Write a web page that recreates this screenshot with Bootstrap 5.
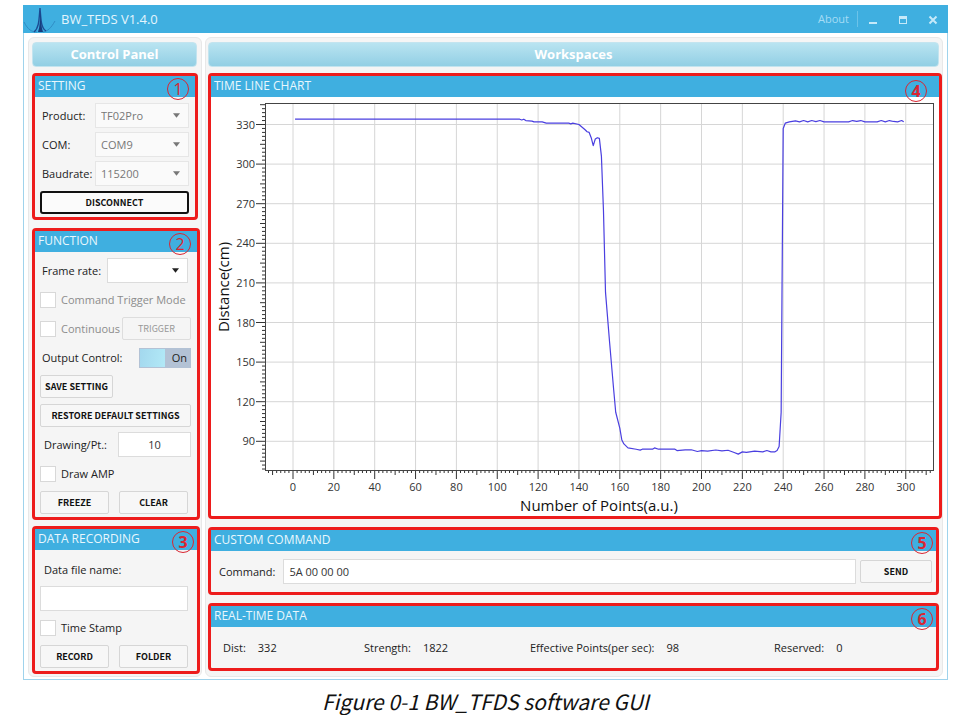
<!DOCTYPE html>
<html lang="en">
<head>
<meta charset="utf-8">
<meta name="viewport" content="width=device-width, initial-scale=1">
<title>BW_TFDS V1.4.0</title>
<link href="https://cdn.jsdelivr.net/npm/bootstrap@5.3.0/dist/css/bootstrap.min.css" rel="stylesheet">
<style>
  :root { --app-blue: #3fafe0; --mark-red: #ed1c1c; }
  body { font-family: "Open Sans", "Noto Sans", sans-serif; font-size: 11px; line-height: 16px; color: #222; background: #fff; }
  .page-wrap { padding: 5px 12px 0 23px; }
  .app-window { border: 1px solid #9fd3ec; border-top: 0; background: #fff; }
  .title-strip { background: var(--app-blue); height: 28px; margin: 0 -1px; color: #e4f5fd; }
  .title-strip .app-name { font-size: 13px; font-weight: 400; }
  .title-strip a { color: #a5dcf5; font-size: 11px; text-decoration: none; border-right: 1px solid #6cc3e9; }
  .title-strip button { color: #c5e9f9; border: 0; background: none; padding: 0; width: 30px; height: 20px; }
  .app-body { padding: 4px 4px 2px 4px; gap: 3px; }
  .side-col { width: 174px; flex: none; }
  .pane { background: #f5f5f5; border: 1px solid #e8e8e8; border-radius: 6px; padding: 4px 1px 2px 3px; min-width: 0; }
  .pane-work { padding: 4px 0 2px 2px; }
  .pane-title { height: 25px; border-radius: 4px; border: 1px solid #c3e4ef; background: linear-gradient(#b9e4f1, #92cfe4); color: #fff; font-size: 13px; line-height: 23px; font-weight: 700; text-align: center; margin: 0 3px 6px 0; }
  .framed { position: relative; border: 3px solid var(--mark-red); border-radius: 4px; background: #f5f5f5; }
  .framed h2 { margin: 0; height: 21px; padding-left: 3px; background: var(--app-blue); color: #e9f7fd; font-size: 12px; font-weight: 400; line-height: 20px; }
  .side-col .framed { margin: 0 0 6px; }
  .side-col .framed.first { margin: 0 2px 8px 0; }
  .call-no { position: absolute; top: 2px; right: 3px; width: 22px; height: 22px; border: 1px solid #d92632; border-radius: 50%; color: #d92632; font-size: 16px; line-height: 20px; font-weight: 700; text-align: center; }
  .call-no.light-no { right: 6px; font-weight: 400; }
  .call-no.wide-no { right: 12px; top: 4px; }
  .rows { padding: 4px 6px 0 5px; }
  .rows-narrow { padding: 5px 9px 0 5px; }
  .rows label { white-space: nowrap; }
  .lead-in { padding-left: 2px; }
  .line { height: 29px; display: flex; align-items: center; }
  .line-inset { padding-right: 3px; }
  .btn-app { height: 23px; padding: 0 4px; border: 1px solid #d6d6d6; border-radius: 2px; background: #f7f7f7; color: #111; font-family: "Noto Sans CJK SC", sans-serif; font-size: 9px; line-height: 16px; font-weight: 700; white-space: nowrap; }
  .btn-app:disabled { background: #f5f5f5; border-color: #ddd; color: #999; opacity: 1; font-weight: 400; }
  .btn-focus { border: 2px solid #111; border-radius: 3px; background: #fbfbfb; }
  .form-control.field, .form-select.field { height: 25px; min-height: 0; border: 1px solid #dcdcdc; border-radius: 0; font-size: 11px; line-height: 16px; padding: 0 5px; background-color: #fff; color: #333; box-shadow: none; }
  .form-select.field { background-image: url("data:image/svg+xml,%3Csvg xmlns='http://www.w3.org/2000/svg' viewBox='0 0 8 5'%3E%3Cpath d='M0 0h8L4 5z' fill='%23222'/%3E%3C/svg%3E"); background-size: 7px 5px; background-position: right 8px center; }
  .form-select.field:disabled { color: #777; background-color: #fafafa; border-color: #e6e6e6; opacity: 1; background-image: url("data:image/svg+xml,%3Csvg xmlns='http://www.w3.org/2000/svg' viewBox='0 0 8 5'%3E%3Cpath d='M0 0h8L4 5z' fill='%23777'/%3E%3C/svg%3E"); }
  .w-long { width: 94px !important; flex: none; } .w-mid { width: 81px !important; flex: none; } .w-num { width: 73px !important; flex: none; }
  .w-half { width: 69px; }
  .w-save { width: 73px; }
  .w-send { width: 72px; flex: none; }
  .tick { width: 16px; height: 16px; border-radius: 0 !important; border: 1px solid #d8d8d8; margin: 0 5px 0 0; float: none; background-color: #fff; opacity: 1 !important; flex: none; }
  .muted-text { color: #8c8c8c; }
  .switch-box { width: 52px; height: 20px; background: #b3c2d5; }
  .switch-box input { appearance: none; width: 25px; height: 18px; margin: 0 0 0 1px; background: linear-gradient(100deg, #a3d8ee, #b2e9f7); }
  .chart-pane { background: #fff; }
  .chart-pane svg { display: block; width: 100%; height: auto; }
  .low-frame { margin: 8px 3px 0 0; }
  .read-outs { height: 41px; padding: 0 0 0 12px; }
  .read-outs dl { display: flex; gap: 12px; margin: 0; }
  .read-outs dt { font-weight: 400; } .read-outs dd { margin: 0; }
  .span-a { width: 141px; } .span-b { width: 166px; } .span-c { width: 244px; }
  .fig-note { font-family: "Noto Sans CJK SC", sans-serif; font-size: 21px; line-height: 28px; font-style: italic; color: #111; margin: 7px 0 0; text-align: center; }
</style>
</head>
<body>
<main class="page-wrap">
<div class="app-window">
  <header class="title-strip d-flex align-items-center">
    <svg width="34" height="28" viewBox="0 0 34 28" aria-hidden="true">
      <path d="M1 17c4 8 8 10 13 10M20 27c5-1 8-4 12-11" fill="none" stroke="#2f8cc4" stroke-width="1"/>
      <path d="M11 27c5-4 5-12 6-24 1 12 1 20 6 23" fill="none" stroke="#1c4b93" stroke-width="1.4"/>
      <path d="M15 27c2-6 2-12 2-20 1 8 1 14 3 20z" fill="#173b7c"/>
    </svg>
    <span class="app-name ms-1">BW_TFDS V1.4.0</span>
    <a class="ms-auto pe-2" href="#about">About</a>
    <button type="button" aria-label="Minimize"><svg width="10" height="10"><path d="M1 7h8v2H1z" fill="currentColor"/></svg></button>
    <button type="button" aria-label="Maximize"><svg width="10" height="10"><path d="M1 1h8v8H1zM2 4v4h6V4z" fill="currentColor" fill-rule="evenodd"/></svg></button>
    <button type="button" aria-label="Close"><svg width="10" height="10"><path d="M1.500 1.500l7 7m0-7l-7 7" stroke="currentColor" stroke-width="2"/></svg></button>
  </header>

  <div class="app-body d-flex">
    <aside class="side-col pane">
      <h1 class="pane-title">Control Panel</h1>

      <section class="framed first">
        <h2>SETTING</h2><span class="call-no light-no">1</span>
        <div class="rows">
          <div class="line justify-content-between"><label for="product" class="lead-in">Product:</label><select id="product" class="form-select field w-long" disabled><option>TF02Pro</option></select></div>
          <div class="line justify-content-between"><label for="com" class="lead-in">COM:</label><select id="com" class="form-select field w-long" disabled><option>COM9</option></select></div>
          <div class="line justify-content-between"><label for="baud" class="lead-in">Baudrate:</label><select id="baud" class="form-select field w-long" disabled><option>115200</option></select></div>
          <div class="line"><button type="button" class="btn btn-app btn-focus w-100">DISCONNECT</button></div>
        </div>
      </section>

      <section class="framed">
        <h2>FUNCTION</h2><span class="call-no light-no">2</span>
        <div class="rows">
          <div class="line line-inset justify-content-between"><label for="rate" class="lead-in">Frame rate:</label><select id="rate" class="form-select field w-mid"><option></option></select></div>
          <div class="line"><input class="form-check-input tick" type="checkbox" id="trig" disabled><label for="trig" class="muted-text">Command Trigger Mode</label></div>
          <div class="line"><input class="form-check-input tick" type="checkbox" id="cont" disabled><label for="cont" class="muted-text">Continuous</label><button type="button" class="btn btn-app w-half ms-auto" disabled>TRIGGER</button></div>
          <div class="line justify-content-between"><label for="outctl" class="lead-in">Output Control:</label><span class="switch-box d-flex align-items-center"><input type="checkbox" role="switch" id="outctl" checked><span class="ms-auto pe-1">On</span></span></div>
          <div class="line"><button type="button" class="btn btn-app w-save">SAVE SETTING</button></div>
          <div class="line"><button type="button" class="btn btn-app w-100">RESTORE DEFAULT SETTINGS</button></div>
          <div class="line justify-content-between"><label for="pt" class="ps-1">Drawing/Pt.:</label><input id="pt" class="form-control field w-num text-center" value="10"></div>
          <div class="line"><input class="form-check-input tick" type="checkbox" id="amp"><label for="amp">Draw AMP</label></div>
          <div class="line line-inset justify-content-between"><button type="button" class="btn btn-app w-half">FREEZE</button><button type="button" class="btn btn-app w-half">CLEAR</button></div>
        </div>
      </section>

      <section class="framed mb-0">
        <h2>DATA RECORDING</h2><span class="call-no">3</span>
        <div class="rows rows-narrow">
          <div class="line"><label for="fname" class="ps-1">Data file name:</label></div>
          <div class="line"><input id="fname" class="form-control field"></div>
          <div class="line"><input class="form-check-input tick" type="checkbox" id="stamp"><label for="stamp">Time Stamp</label></div>
          <div class="line justify-content-between"><button type="button" class="btn btn-app w-half">RECORD</button><button type="button" class="btn btn-app w-half">FOLDER</button></div>
        </div>
      </section>
    </aside>

    <div class="pane pane-work flex-grow-1 d-flex flex-column">
      <h1 class="pane-title">Workspaces</h1>

      <section class="framed chart-pane">
        <h2>TIME LINE CHART</h2><span class="call-no wide-no">4</span>
        <svg id="chart" viewBox="0 0 728 419" role="img" aria-label="Distance against number of points"></svg>
      </section>

      <section class="framed low-frame">
        <h2>CUSTOM COMMAND</h2><span class="call-no">5</span>
        <div class="d-flex align-items-center gap-1 px-1 pt-2 pb-2">
          <label for="cmd" class="ps-1 pe-1">Command:</label>
          <input id="cmd" class="form-control field" value="5A 00 00 00">
          <button type="button" class="btn btn-app w-send">SEND</button>
        </div>
      </section>

      <section class="framed low-frame">
        <h2>REAL-TIME DATA</h2><span class="call-no">6</span>
        <div class="read-outs d-flex align-items-center">
          <dl class="span-a"><dt>Dist:</dt><dd>332</dd></dl>
          <dl class="span-b"><dt>Strength:</dt><dd>1822</dd></dl>
          <dl class="span-c"><dt>Effective Points(per sec):</dt><dd>98</dd></dl>
          <dl><dt>Reserved:</dt><dd>0</dd></dl>
        </div>
      </section>
    </div>
  </div>
</div>
<p class="fig-note">Figure 0-1 BW_TFDS software GUI</p>
</main>

<script src="https://cdn.jsdelivr.net/npm/bootstrap@5.3.0/dist/js/bootstrap.bundle.min.js"></script>
<script>
  const svg = document.getElementById('chart');
  const L = 54, T = 6, R = 722, B = 373;
  const px = v => 82 + v * 2.0425;
  const py = v => 27.5 + (330 - v) * 1.32;
  const add = (tag, attrs, text) => {
    const e = document.createElementNS('http://www.w3.org/2000/svg', tag);
    for (const k in attrs) e.setAttribute(k, attrs[k]);
    if (text !== undefined) e.textContent = text;
    svg.appendChild(e);
  };
  let grid = '', ticks = '';
  for (let v = 0; v <= 300; v += 20) grid += `M${px(v)} ${T}V${B}`;
  for (let v = 90; v <= 330; v += 30) grid += `M${L} ${py(v)}H${R}`;
  for (let v = -12; v <= 312; v += 2) ticks += `M${px(v)} ${B}v${v % 20 === 0 ? 9 : v % 10 === 0 ? 5 : 3}`;
  for (let v = 69; v <= 345; v += 3) ticks += `M${L} ${py(v)}h-${v % 30 === 0 ? 9 : v % 15 === 0 ? 5 : 3}`;
  add('path', { d: grid, stroke: '#d6d6d6', 'stroke-width': 1, fill: 'none' });
  add('path', { d: ticks, stroke: '#333', 'stroke-width': 1, fill: 'none' });
  add('rect', { x: L + .5, y: T + .5, width: R - L, height: B - T, fill: 'none', stroke: '#444' });
  for (let v = 0; v <= 300; v += 20) add('text', { x: px(v), y: 394, 'text-anchor': 'middle', 'font-size': 11, fill: '#333' }, v);
  for (let v = 90; v <= 330; v += 30) add('text', { x: 44, y: py(v) + 4, 'text-anchor': 'end', 'font-size': 11, fill: '#333' }, v);
  add('text', { x: 388, y: 414, 'text-anchor': 'middle', 'font-size': 15, fill: '#111' }, 'Number of Points(a.u.)');
  add('text', { transform: 'translate(18 190) rotate(-90)', 'text-anchor': 'middle', 'font-size': 15, fill: '#111' }, 'Distance(cm)');

  const samples = [[1,334],[111,334],[112,333.4],[113,334],[114,333],[117,332.6],[118,332],[122,332],[124,331],[135,331],[136,330.5],[137,331],[140,330],[143,326],[144,324.5],[145,324],[146,320],[147,314],[148,319],[149,320],[150,319.5],[151,306],[152,265],[153,203],[155,165],[157,129],[158,112],[160,100],[161,91],[162,88],[164,85],[168,84],[170,83.3],[171,84],[176,84],[177,85],[179,84],[187,84],[188,83],[192,83.5],[195,83.6],[198,82.3],[200,83],[203,82.5],[207,83.4],[210,82.7],[213,83.2],[216,81.5],[218,80.3],[220,82],[222,81.6],[226,82.6],[230,82],[232,83],[234,82],[236,82],[237,83],[238,86],[239,112],[239.4,200],[240,327],[241,331],[243,332],[246,332.8],[248,332],[250,333],[252,332],[254,333],[256,332.2],[258,333],[260,332],[272,332],[274,333],[276,332.4],[278,333],[280,332],[286,332],[288,333],[290,332],[292,333],[294,332.3],[296,332],[298,333],[299,332]];
  add('polyline', { points: samples.map(([a, b]) => px(a) + ',' + py(b)).join(' '), fill: 'none', stroke: '#4a3fe0', 'stroke-width': 1.2, 'stroke-linejoin': 'round' });
</script>
</body>
</html>
